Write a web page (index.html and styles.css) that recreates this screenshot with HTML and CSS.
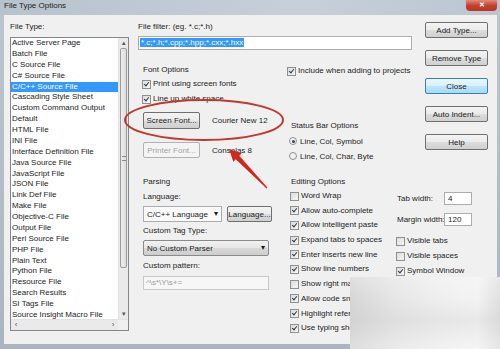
FILE: index.html
```html
<!DOCTYPE html>
<html>
<head>
<meta charset="utf-8">
<link rel="stylesheet" href="styles.css">
</head>
<body>
<div class="window">
  <div class="titlebar">
    <span class="title">File Type Options</span>
    <span class="closex">✕</span>
  </div>
  <div class="client">
    <div class="leftcol">
      <div class="lbl">File Type:</div>
      <div class="listbox">
        <div class="listmain">
          <ul class="items">
            <li>Active Server Page</li>
            <li>Batch File</li>
            <li>C Source File</li>
            <li>C# Source File</li>
            <li class="sel">C/C++ Source File</li>
            <li>Cascading Style Sheet</li>
            <li>Custom Command Output</li>
            <li>Default</li>
            <li>HTML File</li>
            <li>INI File</li>
            <li>Interface Definition File</li>
            <li>Java Source File</li>
            <li>JavaScript File</li>
            <li>JSON File</li>
            <li>Link Def File</li>
            <li>Make File</li>
            <li>Objective-C File</li>
            <li>Output File</li>
            <li>Perl Source File</li>
            <li>PHP File</li>
            <li>Plain Text</li>
            <li>Python File</li>
            <li>Resource File</li>
            <li>Search Results</li>
            <li>SI Tags File</li>
            <li>Source Insight Macro File</li>
          </ul>
          <div class="vscroll">
            <div class="sarrow">▴</div>
            <div class="thumb"><span class="grip"></span></div>
            <div class="strack"></div>
            <div class="sarrow">▾</div>
          </div>
        </div>
        <div class="hscroll">
          <span class="harrow">‹</span>
          <span class="htrack"></span>
          <span class="harrow">›</span>
          <span class="corner"></span>
        </div>
      </div>
    </div>

    <div class="maincol">
      <div class="topsec">
        <div class="topleft">
          <div class="lbl">File filter: (eg. *.c;*.h)</div>
          <div class="textbox"><span class="hl">*.c;*.h;*.cpp;*.hpp;*.cxx;*.hxx</span></div>
          <div class="subrow">
            <div class="fontopts">
              <div class="lbl g1">Font Options</div>
              <div class="chk r1"><span class="cb on"></span>Print using screen fonts</div>
              <div class="chk r2"><span class="cb on"></span>Line up white space</div>
              <div class="btnrow b1"><span class="btn w57">Screen Font...</span><span class="fontname">Courier New 12</span></div>
              <div class="btnrow b2"><span class="btn w57 dis">Printer Font...</span><span class="fontname">Consolas 8</span></div>
            </div>
            <div class="statopts">
              <div class="chk inc"><span class="cb on"></span>Include when adding to projects</div>
              <div class="lbl sblabel">Status Bar Options</div>
              <div class="rad rd1"><span class="rb on"></span>Line, Col, Symbol</div>
              <div class="rad rd2"><span class="rb"></span>Line, Col, Char, Byte</div>
            </div>
          </div>
        </div>
        <div class="buttons">
          <span class="btn">Add Type...</span>
          <span class="btn">Remove Type</span>
          <span class="btn def">Close</span>
          <span class="btn">Auto Indent...</span>
          <span class="btn">Help</span>
        </div>
      </div>

      <div class="botsec">
        <div class="parsing">
          <div class="lbl">Parsing</div>
          <div class="lbl p1">Language:</div>
          <div class="prow">
            <span class="combo white w79">C/C++ Language<span class="dd">▾</span></span>
            <span class="btn w45">Language...</span>
          </div>
          <div class="lbl p2">Custom Tag Type:</div>
          <span class="combo gray w126">No Custom Parser<span class="dd">▾</span></span>
          <div class="lbl p3">Custom pattern:</div>
          <div class="textbox disabled w126">^\s*\Y\s+=</div>
        </div>
        <div class="editing">
          <div class="editcol">
            <div class="lbl">Editing Options</div>
            <div class="cblist">
              <div class="chk"><span class="cb"></span>Word Wrap</div>
              <div class="chk"><span class="cb on"></span>Allow auto-complete</div>
              <div class="chk"><span class="cb on"></span>Allow intelligent paste</div>
              <div class="chk"><span class="cb on"></span>Expand tabs to spaces</div>
              <div class="chk"><span class="cb on"></span>Enter inserts new line</div>
              <div class="chk"><span class="cb on"></span>Show line numbers</div>
              <div class="chk"><span class="cb"></span>Show right margin</div>
              <div class="chk"><span class="cb on"></span>Allow code snippets</div>
              <div class="chk"><span class="cb on"></span>Highlight references</div>
              <div class="chk"><span class="cb on"></span>Use typing shortcuts</div>
            </div>
          </div>
          <div class="sidecol">
            <div class="numrow"><span class="numlbl">Tab width:</span><span class="numbox">4</span></div>
            <div class="numrow m2"><span class="numlbl">Margin width:</span><span class="numbox">120</span></div>
            <div class="chk v1"><span class="cb"></span>Visible tabs</div>
            <div class="chk v2"><span class="cb"></span>Visible spaces</div>
            <div class="chk v2"><span class="cb on"></span>Symbol Window</div>
          </div>
        </div>
      </div>
    </div>
  </div>

  <svg class="annot" width="500" height="349" viewBox="0 0 500 349">
    <ellipse cx="204" cy="120" rx="79" ry="20" fill="none" stroke="#c0392e" stroke-width="2"/>
    <polygon points="229,149 241.7,153.3 239.3,155.7 267.4,187.6 266.6,188.4 235.7,159.3 233.3,161.7" fill="#d0281e"/>
  </svg>
  <div class="blur"></div>
</div>
</body>
</html>
```

FILE: styles.css
```css
* { box-sizing: border-box; }
html, body { margin: 0; padding: 0; }
body {
  width: 500px;
  height: 349px;
  overflow: hidden;
  font-family: "Liberation Sans", Arial, sans-serif;
  font-size: 8px;
  color: #1c1c1c;
  background: #b9c3cd;
}
.window {
  position: relative;
  width: 500px;
  height: 349px;
  display: flex;
  flex-direction: column;
  background: linear-gradient(#bcc6d0, #aab5c1);
}
.titlebar {
  height: 15px;
  display: flex;
  align-items: flex-start;
  justify-content: space-between;
  background: linear-gradient(90deg, #b8c2cd, #c7d0d9 60%, #bcc6d0);
}
.title {
  padding-left: 4px;
  padding-top: 1px;
  line-height: 10px;
  color: #222;
}
.closex {
  width: 31px;
  height: 11px;
  margin-right: 3px;
  border-radius: 0 0 4px 4px;
  background: linear-gradient(#e08a7c, #c4412f 50%, #b83424);
  color: #fff;
  font-size: 7px;
  line-height: 10px;
  text-align: center;
  font-weight: bold;
}
.client {
  flex: 1;
  margin: 0 3px 5px 4px;
  background: #f0f0f0;
  display: flex;
  padding-top: 7px;
}
.lbl { line-height: 10px; height: 10px; white-space: nowrap; }

/* list */
.leftcol { margin-left: 6px; width: 119px; }
.leftcol .lbl { margin-bottom: 5px; }
.listbox {
  width: 119px;
  height: 294px;
  border: 1px solid #828790;
  background: #fff;
  display: flex;
  flex-direction: column;
}
.listmain { flex: 1; display: flex; min-height: 0; }
.items {
  list-style: none;
  margin: 0;
  padding: 0;
  flex: 1;
}
.items li {
  height: 10.88px;
  line-height: 10.88px;
  padding-left: 1px;
  white-space: nowrap;
  overflow: hidden;
}
.items li.sel { background: #3399ff; color: #fff; }
.vscroll {
  width: 10px;
  display: flex;
  flex-direction: column;
  background: #eaeaea;
  border-left: 1px solid #e3e3e3;
}
.sarrow {
  height: 10px;
  font-size: 7px;
  line-height: 10px;
  text-align: center;
  color: #555;
}
.thumb {
  height: 220px;
  margin: 0 1px;
  border: 1px solid #9a9a9a;
  border-radius: 2px;
  background: linear-gradient(90deg, #eeeeee, #dcdcdc);
  display: flex;
  align-items: center;
  justify-content: center;
}
.grip { width: 4px; height: 5px; border-top: 1px solid #888; border-bottom: 1px solid #888; }
.strack { flex: 1; }
.hscroll {
  height: 11px;
  display: flex;
  align-items: center;
  background: #eaeaea;
  border-top: 1px solid #e3e3e3;
}
.harrow { width: 10px; text-align: center; font-size: 8px; line-height: 10px; color: #555; }
.htrack { flex: 1; }
.corner { width: 10px; height: 10px; background: #f0f0f0; }

/* main */
.maincol { margin-left: 9px; flex: 1; display: flex; flex-direction: column; }
.topsec { display: flex; }
.topleft { width: 274px; }
.topleft > .lbl { margin-bottom: 4px; }
.textbox {
  height: 14px;
  border: 1px solid #abadb3;
  background: #fff;
  line-height: 12px;
  padding-left: 1px;
  white-space: nowrap;
  overflow: hidden;
}
.hl { background: #3399ff; color: #fff; padding: 0 1px; }
.textbox.disabled { color: #9a9a9a; border-color: #c8c8c8; background: #f7f7f7; padding-left: 2px; }
.w126 { width: 126px; }
.subrow { display: flex; margin-top: 14px; }
.fontopts { width: 148px; padding-left: 4px; }
.g1 { margin-top: 1px; padding-left: 1px; }
.chk { display: flex; align-items: center; height: 10px; line-height: 10px; white-space: nowrap; }
.r1 { margin-top: 4px; }
.r2 { margin-top: 5px; }
.cb {
  position: relative;
  width: 9px;
  height: 9px;
  margin-right: 2px;
  flex: none;
  border: 1px solid #8e8f8f;
  background: linear-gradient(135deg, #dcdcdc, #f6f6f6);
}
.cb.on::after {
  content: "";
  position: absolute;
  left: 2px;
  top: 0px;
  width: 2px;
  height: 4px;
  border-right: 1.5px solid #2b3a4a;
  border-bottom: 1.5px solid #2b3a4a;
  transform: rotate(40deg);
}
.btnrow { display: flex; align-items: center; }
.b1 { margin-top: 8px; padding-left: 1px; }
.b2 { margin-top: 13px; padding-left: 1px; }
.btn {
  display: inline-flex;
  align-items: center;
  justify-content: center;
  height: 16px;
  border: 1px solid #707070;
  border-radius: 2px;
  background: linear-gradient(#f3f3f3, #ebebeb 50%, #dddddd 51%, #cfcfcf);
  white-space: nowrap;
  color: #1c1c1c;
}
.b1 .btn { height: 17px; }
.btn.dis { color: #a4a4a4; border-color: #adb2b5; background: #f4f4f4; }
.btn.def { border-color: #3c7fb1; background: linear-gradient(#eaf6fd, #d9f0fc 50%, #bee6fd 51%, #a7d9f5); }
.w57 { width: 57px; }
.w45 { width: 45px; margin-left: 5px; }
.fontname { margin-left: 12px; }
.statopts { flex: 1; }
.inc { margin-top: 2px; padding-left: 1px; }
.sblabel { margin-top: 45px; padding-left: 5px; }
.rad { display: flex; align-items: center; height: 10px; padding-left: 3px; white-space: nowrap; }
.rd1 { margin-top: 5px; }
.rd2 { margin-top: 5px; }
.rb {
  position: relative;
  width: 8px;
  height: 8px;
  margin-right: 3px;
  border-radius: 50%;
  border: 1px solid #8e8f8f;
  background: #f2f2f2;
}
.rb.on::after {
  content: "";
  position: absolute;
  left: 1.5px;
  top: 1.5px;
  width: 3px;
  height: 3px;
  border-radius: 50%;
  background: #2c4660;
}
.buttons {
  margin-left: 13px;
  width: 63px;
  display: flex;
  flex-direction: column;
  gap: 12px;
}
.buttons .btn { width: 63px; }

.botsec { display: flex; margin-top: 16px; }
.parsing { width: 149px; padding-left: 5px; }
.p1 { margin-top: 5px; }
.prow { display: flex; margin-top: 4px; }
.p2 { margin-top: 4px; }
.parsing > .combo { margin-top: 4px; }
.p3 { margin-top: 5px; margin-bottom: 5px; }
.combo {
  position: relative;
  display: flex;
  align-items: center;
  height: 16px;
  padding-left: 3px;
  border: 1px solid #8a8a8a;
  border-radius: 2px;
  white-space: nowrap;
}
.combo.white { background: #fafafa; border-color: #abadb3; border-radius: 0; }
.combo.gray { background: linear-gradient(#f2f2f2, #e6e6e6 50%, #d8d8d8 51%, #cdcdcd); border-color: #8a8a8a; }
.w79 { width: 79px; }
.dd { position: absolute; right: 3px; top: 2px; font-size: 8px; line-height: 10px; }
.editing { flex: 1; display: flex; }
.editcol { width: 109px; padding-left: 4px; }
.cblist { margin-top: 4px; margin-left: -1px; display: flex; flex-direction: column; gap: 4.7px; }
.cblist .cb { margin-right: 2px; }
.sidecol { flex: 1; }
.numrow { display: flex; align-items: center; margin-top: 15px; height: 13px; }
.m2 { margin-top: 8px; }
.numlbl { flex: none; width: 47px; margin-left: 1px; white-space: nowrap; }
.numbox {
  width: 28px;
  height: 13px;
  border: 1px solid #abadb3;
  background: #fff;
  line-height: 11px;
  padding-left: 3px;
}
.v1 { margin-top: 10px; }
.v2 { margin-top: 5px; }
.sidecol .chk .cb { margin-right: 2px; }

/* overlays */
.annot { position: absolute; left: 0; top: 0; pointer-events: none; }
.blur {
  position: absolute;
  left: 350px;
  top: 277px;
  width: 150px;
  height: 72px;
  background:
    linear-gradient(180deg, rgba(255,255,255,0.25), rgba(255,255,255,0) 30%, rgba(200,200,200,0.25) 60%, rgba(255,255,255,0.2)),
    linear-gradient(90deg, #d6d6d6, #e6e6e6 30%, #efefef 60%, #f3f3f3 85%, #e0e0e0);
}
```
